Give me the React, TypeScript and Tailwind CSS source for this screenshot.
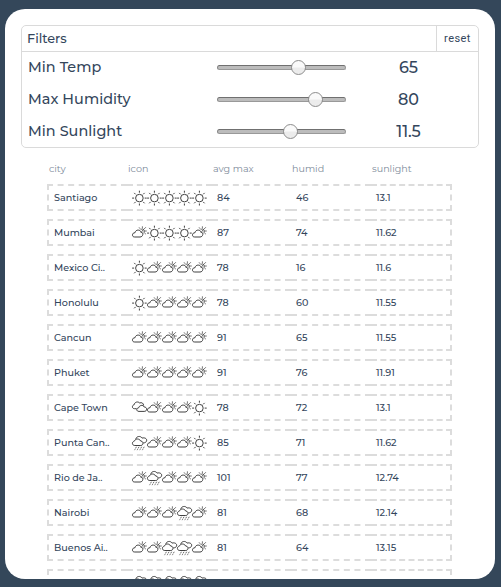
import React from "react";

type Kind = "s" | "p" | "c" | "r";

function WeatherIcon({ kind }: { kind: Kind }) {
  return (
    <svg width="15" height="17" viewBox="0 0 15 17" fill="none" stroke="#2b2b2b" strokeWidth="0.9" className="block shrink-0 overflow-visible">
      {kind === "s" && (
        <>
          <circle cx="7.4" cy="9.1" r="3.8" />
          <path d="M7.4 3.7V1.7M7.4 14.5v2M2.1 9.1H0.1M12.7 9.1h2M3.6 5.3 2.2 3.9M11.2 5.3l1.4-1.4M3.6 12.9 2.2 14.3M11.2 12.9l1.4 1.4" />
        </>
      )}
      {kind === "p" && (
        <>
          <path d="M2.7 13 C1.1 13 0.4 12.1 0.5 10.8 C0.6 9.5 1.6 8.7 2.9 8.8 C3.4 6.9 4.7 6 6.3 6.1 C7.9 6.2 8.7 7 8.9 8.4 C10.3 8.3 11 9.2 10.8 10.5 C10.6 12 9.5 13 8 13 Z" />
          <path strokeWidth="0.65" d="M8.3 6.1 C9 4.8 11 4.6 12 5.8 C13 7 12.5 8.4 11.5 8.9M10.4 4.4V2.3M8.3 4.9 7 3.3M12 5.1l1.9-1.9M12.7 7h2.1M12.2 8.6l1.7 1.6M9.4 7.6l2.3-2.3M10.4 8l1.5-1.4" />
        </>
      )}
      {kind === "c" && (
        <>
          <path d="M7 12.4 C4.1 12.4 4 9.2 6.7 8.8 C7.1 6.4 11 5.2 12.2 8 C15.5 8 15.5 12.4 12.2 12.4 Z" />
          <path d="M4.6 9.7H2.4 C-0.3 9.6 -0.1 6.1 2.2 5.7 C2.5 3 6 2.1 7.7 4 C9.6 3 11.7 4.3 11.6 6.5" />
        </>
      )}
      {kind === "r" && (
        <>
          <path d="M2.8 11.5 C-0.3 11.5 -0.3 7.6 2.4 7.1 C3.2 4.5 7.5 4.2 8.6 7 C11.8 6.9 11.7 11.5 8.8 11.5 Z" />
          <path d="M3.8 5.1 C4.3 2.1 8.7 1.5 10 4.1 C12.5 3.3 15.2 4.6 14.6 6.8 C14.3 8.2 13 8.9 11.3 8.9" />
          <path strokeWidth="0.75" strokeDasharray="1.3 0.8" d="M4.4 12.8 2.3 16.6M7 12.8 4.9 16.6M9.6 12.8 7.5 16.6M12.2 12.8 10.1 16.6" />
        </>
      )}
    </svg>
  );
}

const filters = [
  { label: "Min Temp", value: "65", left: 74 },
  { label: "Max Humidity", value: "80", left: 91 },
  { label: "Min Sunlight", value: "11.5", left: 66 },
];

const rows: [string, string, string, string, string][] = [
  ["Santiago", "sssss", "84", "46", "13.1"],
  ["Mumbai", "psssp", "87", "74", "11.62"],
  ["Mexico Ci..", "spppp", "78", "16", "11.6"],
  ["Honolulu", "spppp", "78", "60", "11.55"],
  ["Cancun", "ppppp", "91", "65", "11.55"],
  ["Phuket", "ppppp", "91", "76", "11.91"],
  ["Cape Town", "cppps", "78", "72", "13.1"],
  ["Punta Can..", "rppps", "85", "71", "11.62"],
  ["Rio de Ja..", "prppp", "101", "77", "12.74"],
  ["Nairobi", "ppprp", "81", "68", "12.14"],
  ["Buenos Ai..", "pprrp", "81", "64", "13.15"],
  ["", "rrrrr", "", "", ""],
];

const cell = "flex items-center border-y-2 border-dashed border-[#dcdcdc] pl-[5px]";
const columns = "grid grid-cols-[80px_85px_79px_80px_81px]";

export default function App() {
  return (
    <div className="h-[587px] w-[501px] bg-[#34475a] pl-[5px] pt-[9px] font-['Montserrat','Inter',sans-serif] text-[#34465c]">
      <main className="h-[570px] w-[490px] overflow-hidden rounded-[20px] bg-white pt-4">
        <section className="ml-4 h-[123px] w-[458px] rounded-[5px] border border-[#dadada]">
          <header className="flex h-[26px] border-b border-[#dadada]">
            <h1 className="flex-1 pl-[5px] text-[12.8px] font-medium leading-[25px]">Filters</h1>
            <button className="w-[42px] border-l border-[#dadada] text-center font-['Roboto',sans-serif] text-[11px] leading-[25px] tracking-[0.45px]">reset</button>
          </header>
          {filters.map((f) => (
            <div key={f.label} className="flex h-8 items-center pb-0.5">
              <span className="w-[195px] pl-1.5 text-[14.4px] font-medium leading-[30px] tracking-[0.05px]">{f.label}</span>
              <div className="relative h-[5px] w-[129px] rounded-[2.5px] border border-t-[#707070] border-r-[#999] border-b-[#999] border-l-[#888] bg-[#bcbcbc]">
                <i
                  className="absolute -top-[6px] block size-[15px] rounded-full border border-[#8d8d8d] bg-linear-to-b from-[#fafafa] from-45% to-[#ececec] to-55%"
                  style={{ left: f.left - 1 }}
                />
              </div>
              <span className="w-[125px] pt-0.5 text-center text-base font-medium leading-[30px] tracking-[-0.1px]">{f.value}</span>
            </div>
          ))}
        </section>
        <section className="ml-[42px] w-[405px]">
          <div className={`${columns} h-9 pt-[13px] text-[9.6px] leading-[16px] text-[#808c9b]`}>
            <span className="pl-0.5">city</span>
            <span className="pl-px">icon</span>
            <span className="pl-px">avg max</span>
            <span className="pl-px">humid</span>
            <span className="pl-px">sunlight</span>
          </div>
          {rows.map(([city, icons, temp, humid, sun], row) => (
            <div key={row} className={`${columns} mb-2 h-[27px] text-[9.6px] font-medium`}>
              <div className={`${cell} border-l-2 pt-0.5`}>{city}</div>
              <div className={cell}>
                {icons.split("").map((k, i) => (
                  <WeatherIcon key={i} kind={k as Kind} />
                ))}
              </div>
              <div className={`${cell} pt-0.5`}>{temp}</div>
              <div className={`${cell} pt-0.5`}>{humid}</div>
              <div className={`${cell} border-r-2 pt-0.5`}>{sun}</div>
            </div>
          ))}
        </section>
      </main>
    </div>
  );
}
